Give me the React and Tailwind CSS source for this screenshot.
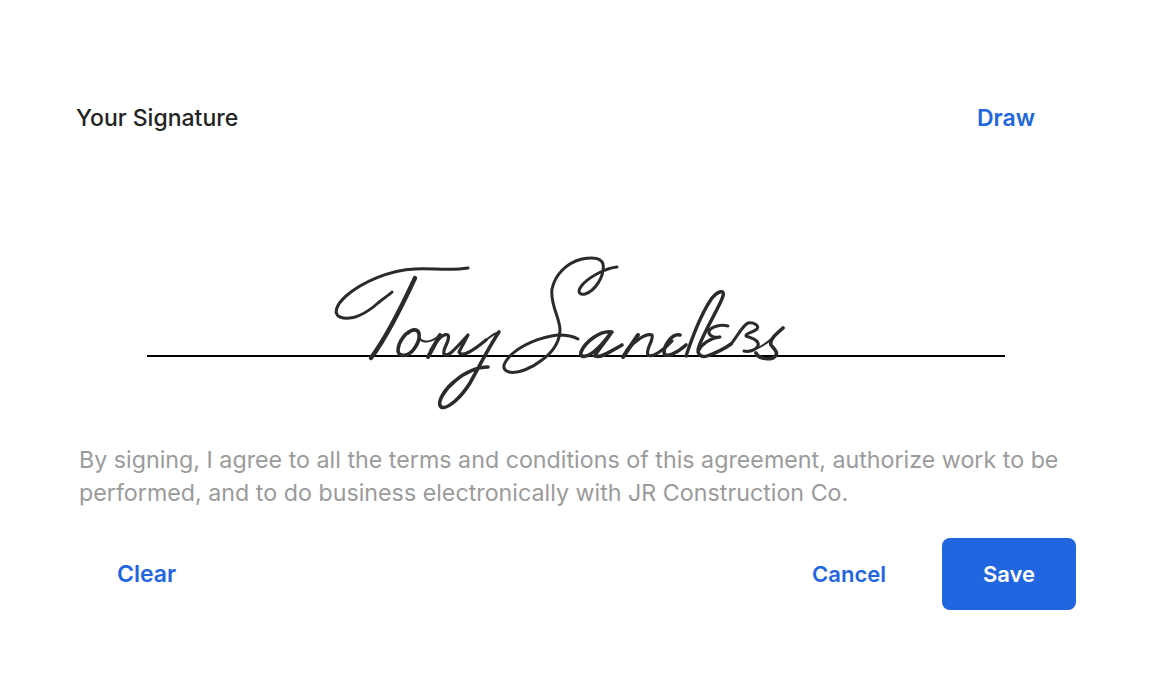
function Signature() {
  return (
    <svg
      viewBox="330 250 460 165"
      fill="none"
      stroke="#2b2b2b"
      strokeLinecap="round"
      strokeLinejoin="round"
      aria-label="Tony Sanders"
      className="absolute left-[183px] top-[-105px] w-[460px] h-[165px]"
    >
      {/* T */}
      <path strokeWidth="3" d="M468 268C450 271 432 268 415 269C390 270 362 282 346 296C336 305 333 314 340 317C352 322 368 312 378 303C384 298 389 295 392 292" />
      <path strokeWidth="4.4" d="M415 278C402 306 386 338 371 358" />
      {/* o n y */}
      <path strokeWidth="3.6" d="M416 330C406 329 398 343 398 351C399 358 409 356 414 349C420 341 421 332 416 330C413 329 410 331 408 333" />
      <path strokeWidth="2" d="M419 338C424 344 432 342 440 335" />
      <path strokeWidth="4" d="M440 335L428 357" />
      <path strokeWidth="3.2" d="M431 350C436 341 443 333 448 335C451 340 442 349 444 354C448 358 456 348 468 335L459 352C462 358 474 350 486 340" />
      <path strokeWidth="3.6" d="M499 332C490 345 480 365 470 383C462 396 448 410 441 407C436 402 446 388 455 381C465 372 478 367 488 367" />
      <path strokeWidth="2" d="M486 340C491 336 495 333 499 332" />
      {/* S */}
      <path strokeWidth="3" d="M617 267C607 268 592 275 583 284C577 291 578 295 585 294C595 291 605 276 603 264C601 257 592 257 582 259C566 263 555 275 552 289C550 304 559 316 560 329C560 342 553 352 542 360C532 368 518 374 509 372C500 369 504 362 512 354C522 345 540 337 558 335C566 335 573 336 578 339" />
      {/* a n d */}
      <path strokeWidth="3.6" d="M612 332C600 330 585 342 581 352C579 359 588 357 596 350C602 345 607 338 611 333C606 341 596 352 595 356C600 359 613 350 622 345" />
      <path strokeWidth="4" d="M638 335L623 357" />
      <path strokeWidth="3.2" d="M627 350C634 342 645 333 652 335C654 340 645 350 648 355C652 358 664 350 672 341" />
      <path strokeWidth="3.6" d="M680 335C672 333 664 345 664 353C666 359 678 352 686 345" />
      <path strokeWidth="3.4" d="M686 356C690 345 698 318 712 298C718 291 725 289 723 296C720 306 706 328 699 346C696 354 701 358 707 356C716 353 724 349 731 344" />
      {/* e r s */}
      <path strokeWidth="3" d="M728 326C720 324 711 327 709 331C708 336 715 338 720 337C710 338 702 344 699 350" />
      <path strokeWidth="3" d="M731 344C736 338 743 325 748 323C754 322 760 326 757 329C752 333 745 333 746 336C751 338 760 340 758 346C755 351 748 352 744 351" />
      <path strokeWidth="2" d="M744 351C754 352 768 344 783 328" />
      <path strokeWidth="3.6" d="M783 328C776 334 769 340 771 345C775 350 780 354 773 358C766 360 758 358 756 353" />
    </svg>
  )
}

export default function App() {
  return (
    <div className="w-[1152px] h-[692px] bg-white font-['Inter','Lato',sans-serif] text-[23px] leading-[32px] font-medium">
      <div className="flex flex-col pt-[102px] pl-[76px] pr-[76px]">
        <div className="flex justify-between items-center h-[32px] pr-[41px]">
          <span className="text-[#232323]">Your Signature</span>
          <button className="text-[#1f66e0] font-semibold">Draw</button>
        </div>
        <div className="relative ml-[71px] mr-[71px] mt-[221px] h-[2px] bg-black">
          <Signature />
        </div>
        <p className="mt-[86px] ml-[3px] text-[#9b9b9b] font-normal text-[23.25px] leading-[33px]">
          By signing, I agree to all the terms and conditions of this agreement, authorize work to be performed, and to do business electronically with JR Construction Co.
        </p>
        <div className="flex items-center justify-between mt-[29px]">
          <button className="ml-[41px] text-[#1f66e0] font-semibold">Clear</button>
          <div className="flex items-center gap-[56px]">
            <button className="text-[#1f66e0] text-[22px] font-semibold">Cancel</button>
            <button className="w-[134px] h-[72px] rounded-[8px] bg-[#1f66e0] text-white text-[22px] font-semibold">Save</button>
          </div>
        </div>
      </div>
    </div>
  )
}
